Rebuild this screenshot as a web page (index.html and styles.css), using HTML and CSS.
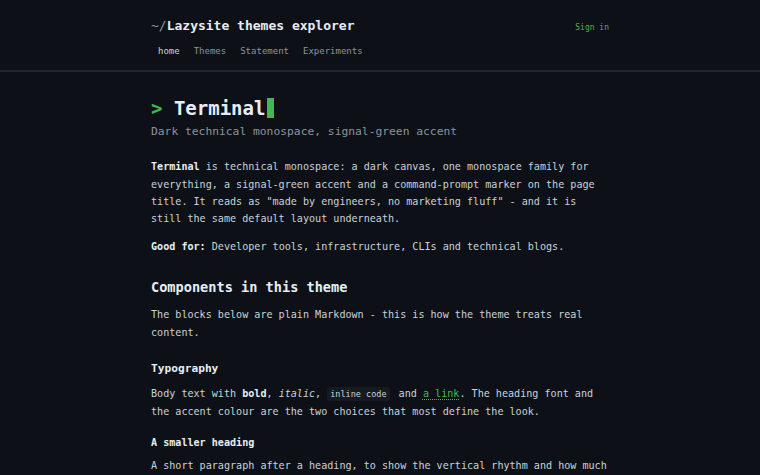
FILE: index.html
```html
<!DOCTYPE html>
<html lang="en">
<head>
  <meta charset="UTF-8">
  <title>Terminal - Lazysite themes explorer</title>
  <meta name="viewport" content="width=device-width, initial-scale=1.0">
  <link rel="stylesheet" href="styles.css">
</head>
<body>
  <header class="site-header">
    <div class="wrap">
      <div class="header-top">
        <a class="brand" href="#"><span class="brand-path">~/</span>Lazysite themes explorer</a>
        <a class="sign-in" href="#">Sign in</a>
      </div>
      <nav class="nav">
        <a class="active" href="#">home</a>
        <a href="#">Themes</a>
        <a href="#">Statement</a>
        <a href="#">Experiments</a>
      </nav>
    </div>
  </header>

  <main class="wrap content">
    <h1><span class="prompt">&gt;</span> Terminal<span class="cursor"></span></h1>
    <p class="subtitle">Dark technical monospace, signal-green accent</p>

    <p><strong>Terminal</strong> is technical monospace: a dark canvas, one monospace family for everything, a signal-green accent and a command-prompt marker on the page title. It reads as "made by engineers, no marketing fluff" - and it is still the same default layout underneath.</p>
    <p><strong>Good for:</strong> Developer tools, infrastructure, CLIs and technical blogs.</p>

    <h2>Components in this theme</h2>
    <p>The blocks below are plain Markdown - this is how the theme treats real content.</p>

    <h3>Typography</h3>
    <p>Body text with <strong>bold</strong>, <em>italic</em>, <code>inline code</code> and <a href="#">a link</a>. The heading font and the accent colour are the two choices that most define the look.</p>

    <h4>A smaller heading</h4>
    <p>A short paragraph after a heading, to show the vertical rhythm and how much space the theme leaves between blocks.</p>
  </main>
</body>
</html>
```

FILE: styles.css
```css
body {
  margin: 0;
  background-color: #0d1117;
  color: #c9d1d9;
  font-family: "DejaVu Sans Mono", monospace;
  font-size: 10.1px;
  line-height: 17.4px;
}

a {
  text-decoration: none;
}

.wrap {
  width: 458px;
  margin: 0 auto;
}

.site-header {
  border-bottom: 2px solid #21262d;
  padding: 17px 0 9px;
}

.header-top {
  display: flex;
  justify-content: space-between;
  align-items: baseline;
}

.brand {
  color: #e6edf3;
  font-size: 13px;
  font-weight: bold;
}

.brand-path {
  color: #8b949e;
  font-weight: normal;
}

.sign-in {
  color: #3fb950;
  font-size: 8px;
}

.nav {
  display: flex;
  gap: 14px;
  margin-top: 7px;
  padding-left: 7px;
}

.nav a {
  color: #8b949e;
  font-size: 9px;
}

.nav a.active {
  color: #c9d1d9;
}

.content {
  padding: 21px 0 40px;
}

h1 {
  margin: 0;
  font-size: 19px;
  line-height: 30px;
  color: #e6edf3;
}

.prompt {
  color: #3fb950;
}

.cursor {
  display: inline-block;
  width: 7px;
  height: 20px;
  margin-left: 2px;
  vertical-align: -3px;
  background-color: #3fb950;
}

.subtitle {
  margin: 0 0 18px;
  font-size: 11.3px;
  color: #8b949e;
}

p {
  margin: 0 0 10px;
}

strong {
  color: #e6edf3;
}

h2 {
  margin: 21px 0 8px;
  font-size: 13.6px;
  line-height: 22px;
  color: #e6edf3;
}

h3 {
  margin: 18px 0 6px;
  font-size: 11.2px;
  line-height: 20px;
  color: #e6edf3;
}

h4 {
  margin: 13px 0 5px;
  font-size: 10.1px;
  line-height: 18px;
  color: #e6edf3;
}

code {
  font-family: "DejaVu Sans Mono", monospace;
  font-size: 8.5px;
  background-color: #161b22;
  padding: 2px 3px;
  margin-right: 3px;
  border-radius: 3px;
}

.content a {
  color: #3fb950;
  text-decoration: underline dotted;
  text-underline-offset: 2px;
}
```
